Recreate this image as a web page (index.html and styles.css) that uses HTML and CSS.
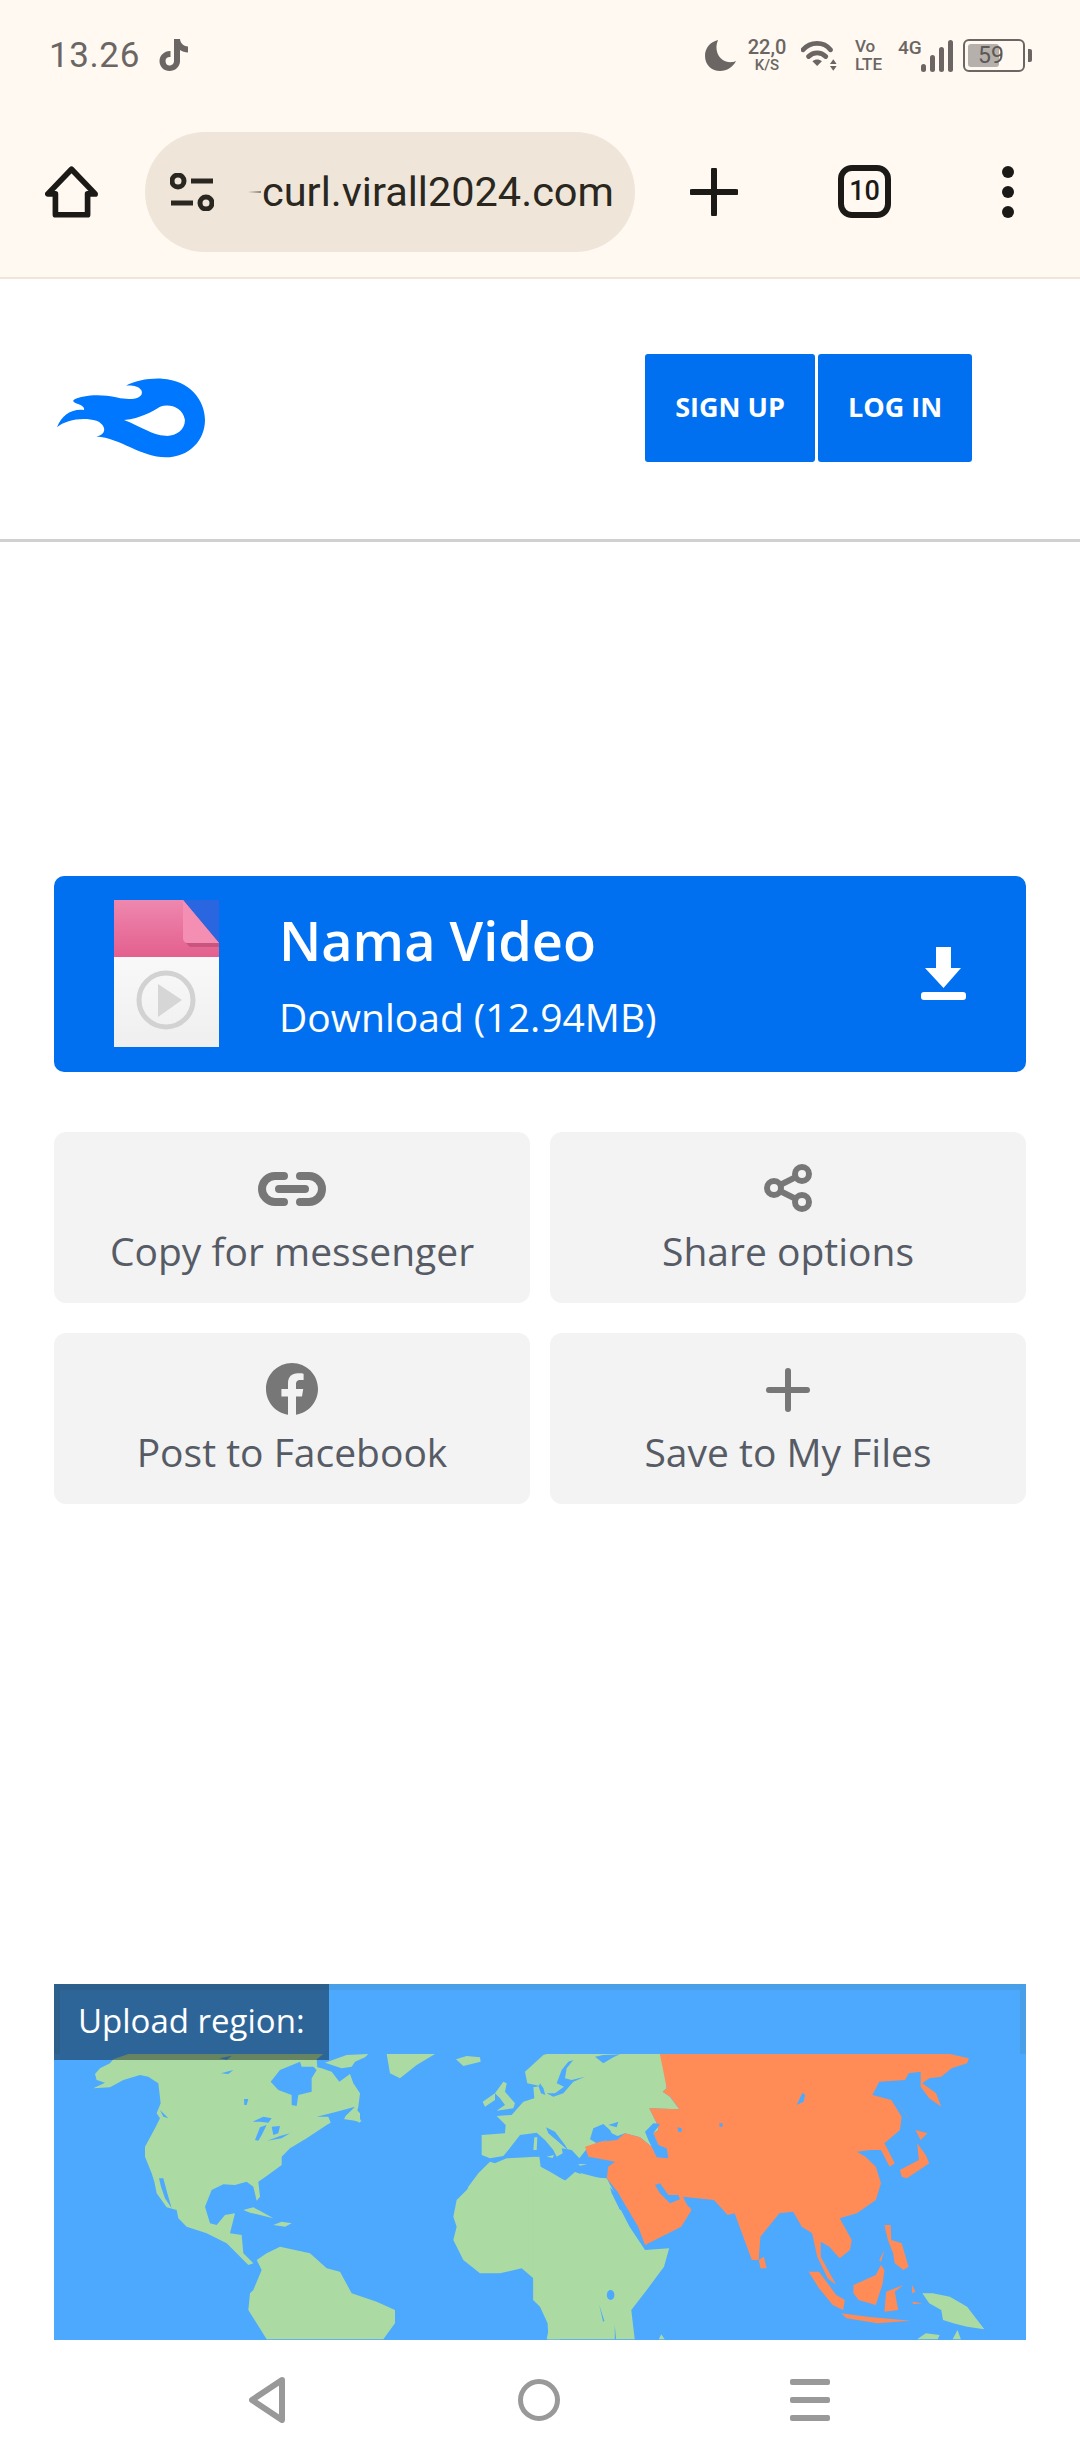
FILE: index.html
```html
<!DOCTYPE html>
<html lang="en">
<head>
<meta charset="utf-8">
<title>Nama Video</title>
<link rel="stylesheet" href="styles.css">
</head>
<body>
<div class="browser">
  <div class="status">
    <div class="status-left">
      <span class="clock">13.26</span>
      <svg class="tiktok" viewBox="0 0 32 34"><path d="M16 1h6c.4 4 3 7 8 7.500v6c-3 0-6-1-8-2.500v11c0 6-5 10-10.500 10S1.500 29 1.500 23 7 12.500 12.500 13v6c-2.500-.5-5 1-5 4s2 4.500 4 4.500 4.500-1.500 4.500-4.500z"/></svg>
    </div>
    <div class="status-right">
      <svg class="moon" viewBox="0 0 32 32"><path d="M13 1C5 3 0 9 0 17c0 9 7 15 15 15 7 0 13-4 16-10-3 1.500-7 1.500-10 .5C13 20 9 10 13 1z"/></svg>
      <div class="speed"><span class="speed-top">22,0</span><span class="speed-sub">K/S</span></div>
      <svg class="wifi" viewBox="0 0 40 32"><path class="wifi-arc" d="M2 10C10 1 24 1 31 10M8 17c5-5 13-5 18 0"/><path d="M12 22c3-2.500 7-2.500 10 0l-5 5zM34 20l3.500 5h-7zM34 32l-3.500-5h7z"/></svg>
      <div class="volte"><span>Vo</span><span>LTE</span></div>
      <span class="net">4G</span>
      <div class="bars"><i class="b1"></i><i class="b2"></i><i class="b3"></i><i class="b4"></i></div>
      <div class="battery"><div class="batt-body"><div class="batt-fill"></div><span class="batt-num">59</span></div><div class="batt-nub"></div></div>
    </div>
  </div>
  <div class="toolbar">
    <svg class="home" viewBox="0 0 56 54"><path d="M28 3 3 29h8v22h34V29h8z"/></svg>
    <div class="pill">
      <svg class="tune" viewBox="0 0 44 38"><circle cx="8" cy="8" r="6"/><path d="M21 8h22M1 30h22"/><circle cx="36" cy="30" r="6"/></svg>
      <span class="fade"></span>
      <span class="url">curl.virall2024.com</span>
    </div>
    <svg class="plus" viewBox="0 0 48 48"><path d="M24 2v44M2 24h44"/></svg>
    <div class="tabs">10</div>
    <div class="dots"><i></i><i></i><i></i></div>
  </div>
</div>

<header class="site-header">
  <svg class="logo" viewBox="83 113 214 242" preserveAspectRatio="none"><path fill-rule="evenodd" d="M83 262C90 225 105 205 122 210 125 190 100 190 108 178 120 165 145 160 170 172 190 182 210 175 205 150 200 135 190 135 183 136 195 122 215 113 235 115 275 120 297 180 297 240 297 300 275 353 240 353 205 353 175 295 140 290 155 285 155 255 140 242 120 230 95 240 83 262ZM180 240C205 235 220 215 232 200 245 190 265 200 268 240 268 270 255 290 240 288 220 285 205 260 180 240Z"/></svg>
  <nav class="auth">
    <a class="auth-btn signup">SIGN UP</a>
    <a class="auth-btn login">LOG IN</a>
  </nav>
</header>

<main class="content">
  <a class="hero">
    <svg class="thumb" viewBox="0 0 105 147">
      <defs>
        <linearGradient id="pink" x1="0" y1="0" x2="0" y2="1"><stop offset="0" stop-color="#ee88ae"/><stop offset="1" stop-color="#e35f8e"/></linearGradient>
        <linearGradient id="paper" x1="0" y1="0" x2="0" y2="1"><stop offset="0" stop-color="#ffffff"/><stop offset="1" stop-color="#efefef"/></linearGradient>
      </defs>
      <rect width="105" height="147" fill="url(#paper)"/>
      <rect width="105" height="57" fill="url(#pink)"/>
      <path d="M69 0h36v43z" fill="#2a66df"/>
      <path d="M69 0l36 43H74q-5 0-5-5z" fill="#f58eb3"/>
      <path d="M72 43h33v4H76z" fill="#c9557f"/>
      <circle cx="52" cy="100" r="27" fill="none" stroke="#d2d2d2" stroke-width="5"/>
      <path d="M44 84l24 16-24 17z" fill="#d6d6d6"/>
    </svg>
    <div class="hero-text">
      <div class="hero-title">Nama Video</div>
      <div class="hero-sub">Download (12.94MB)</div>
    </div>
    <svg class="dl" viewBox="0 0 45 53"><path d="M15 0h15v21h10L22.500 41 4 21h11z"/><rect y="45" width="45" height="8" rx="3"/></svg>
  </a>

  <section class="actions">
    <a class="action">
      <svg class="ico ico-link" viewBox="0 0 68 34"><path d="M26 4H17a13 13 0 0 0 0 26h9M42 4h9a13 13 0 0 1 0 26h-9"/><path d="M21 17h26"/></svg>
      <span class="action-label">Copy for messenger</span>
    </a>
    <a class="action">
      <svg class="ico ico-share" viewBox="0 0 48 48"><circle cx="10" cy="24" r="7"/><circle cx="38" cy="10" r="7"/><circle cx="38" cy="38" r="7"/><path d="M16 21l16-8M16 27l16 8"/></svg>
      <span class="action-label">Share options</span>
    </a>
    <a class="action">
      <svg class="ico ico-fb" viewBox="0 0 52 52"><path d="M52 26C52 11.600 40.400 0 26 0S0 11.600 0 26c0 13 9.500 23.800 22 25.700V33.500h-6.600V26H22v-5.700c0-6.500 3.900-10.100 9.800-10.100 2.800 0 5.800.5 5.800.5v6.400h-3.300c-3.200 0-4.300 2-4.300 4v4.900h7.200l-1.200 7.500h-6v18.200C42.500 49.800 52 39 52 26z"/></svg>
      <span class="action-label">Post to Facebook</span>
    </a>
    <a class="action">
      <svg class="ico ico-plus" viewBox="0 0 44 44"><path d="M22 3v38M3 22h38"/></svg>
      <span class="action-label">Save to My Files</span>
    </a>
  </section>

  <section class="map">
    <svg class="map-art" viewBox="54 1984 972 356">
      <rect class="sea" x="54" y="1984" width="972" height="356"/>
      <g transform="translate(40 1970) scale(.33333)">
        <g class="land">
          <path d="M165 312L180 295 210 280 220 268 265 252H850L830 268 832 292 845 295 875 305 898 335 930 312 940 340 960 370 955 410 950 430 965 455 930 450 895 445 860 465 800 505 750 535 725 560 725 585 680 618 655 635 660 680 650 692 640 650 620 635 585 645 550 643 515 660 495 710 510 760 530 765 555 735 585 730 570 790 605 795 610 850 640 880 625 885 590 850 560 820 500 790 440 770 415 745 410 720 380 712 350 670 343 635 335 610 315 560 315 530 345 475 360 445 350 430 362 400 355 340 325 320 300 315 250 330 210 352 160 355 100 378 160 355 195 338 170 330Z"/>
          <path d="M855 278L920 255 985 252 975 262 945 275 935 290 905 295Z"/>
          <path d="M1040 252H1185L1130 285 1080 325 1050 310Z"/>
          <path d="M610 720L640 712 665 725 700 745 660 735 630 728Z"/>
          <path d="M700 765L725 755 755 760 735 770Z"/>
          <path d="M640 960L665 900 650 870 680 850 720 830 810 850 860 895 900 905 935 970 1010 995 1065 1020 1065 1060 1030 1108H680L625 1020 630 970Z"/>
          <path d="M1240 740L1250 690 1290 650 1340 590 1400 565 1490 560 1500 590 1560 625V1108H1520L1530 1060 1490 970 1480 925 1445 895 1380 910 1320 910 1270 870 1240 810 1250 770Z"/>
        </g>
        <g class="water">
          <path d="M692 335L720 300 780 275 785 290 820 290 830 300 815 325 815 365 775 375 770 408 755 405 755 375 715 360Z"/>
          <path d="M830 440L890 425 945 410 920 435 900 465 875 465 865 440Z"/>
          <path d="M357 625L370 625 382 670 395 715 375 685 363 650Z"/>
          <path d="M638 455L670 440 695 445 685 458 660 455ZM645 510L660 472 680 465 665 495 655 512ZM695 470L720 468 715 490 700 495ZM682 512L720 498 750 490 725 505Z"/>
          <path d="M538 265L575 257 560 270ZM543 310L580 300 565 312ZM612 387h13l-5 18h-7ZM360 420L385 445 370 440Z"/>
        </g>
        <g class="land"><path d="M915 440L945 415 960 430 960 458 930 445Z"/></g>
      </g>
      <g transform="translate(440 2050) scale(.33333)">
        <g class="land">
          <path d="M125 255L195 250 197 225 170 198 215 195 250 155 283 145 280 112 300 108 262 100 255 65 310 15 320 12H670L680 115 668 125 690 140 718 178 628 175 648 215 655 240 640 250 655 285 632 288 600 262 555 250 445 290 418 325 395 300 365 295 368 310 350 320 340 300 315 270 290 248 240 255 205 300 190 318 150 325 125 315Z"/>
          <path d="M165 130L190 95 200 100 195 125 225 160 220 175 170 182 195 165 180 145Z"/>
          <path d="M128 155L165 130 165 150 135 170Z"/>
          <path d="M48 28L80 18 120 22 122 35 70 48Z"/>
          <path d="M283 262L292 262 290 300 280 300ZM320 320L342 315 338 324ZM415 342L442 343 420 347Z"/>
          <path d="M45 480L75 440 85 410 115 370 150 335 165 340 250 325 298 320 302 350 335 368 375 392 405 366 450 382 500 385 520 422 545 480Z"/>
        </g>
        <g class="water">
          <path d="M345 130L372 110 350 100 365 60 385 35 400 30 380 55 375 85 395 90 435 80 400 95 370 130 340 140 320 130Z"/>
          <path d="M465 20L490 15 540 13 520 22 490 40Z"/>
          <path d="M300 100L310 115 316 135 303 130 296 110Z"/>
          <path d="M318 232L345 245 375 285 385 302 355 275 325 250Z"/>
          <path d="M450 268L460 235 490 222 510 240 515 250 570 275 500 270 470 280Z"/>
          <path d="M505 225L535 215 530 232Z"/>
        </g>
      </g>
      <g transform="translate(540 1970) scale(.34444 .33333)">
        <g class="land">
          <path d="M-20 600L0 600 75 632 120 610 195 630 225 700 260 770 305 840 375 835 360 890 310 960 265 1020 275 1108H25L22 1060 0 1010-20 990Z"/>
          <path d="M345 1108L352 1093 362 1108Z"/>
          <path d="M1110 970L1140 970 1190 980 1240 1010 1290 1078 1240 1070 1200 1060 1170 1050 1165 1020 1130 1000Z"/>
          <path d="M1095 1108L1120 1090 1160 1095 1155 1108ZM1198 1108L1212 1080 1222 1108Z"/>
        </g>
        <g class="water">
          <ellipse cx="205" cy="975" rx="11" ry="15"/>
          <path d="M172 1005l15 48-4 2ZM217 1065l4 43h-4Z"/>
        </g>
        <g class="asia">
          <path d="M348 252H1190L1245 265 1240 280 1195 295 1165 320 1130 325 1110 340 1150 370 1165 410 1130 385 1105 350 1105 305 1070 310 1060 330 985 335 965 375 1020 390 1050 440 1045 480 1000 520 1020 560 1030 580 1015 590 990 540 960 540 920 545 945 560 975 590 990 640 975 690 920 730 870 745 905 810 900 840 870 865 840 830 815 815 815 860 860 945 835 925 805 860 790 790 760 770 735 725 695 730 640 800 635 870 615 870 565 730 545 735 505 690 415 680 440 720 410 770 305 825 285 770 256 720 225 665 194 625 198 590 218 575 165 565 140 560 131 530 174 515 223 510 247 490 290 502 321 528 344 525 329 490 344 480 337 455 317 415 405 418 378 380 356 365 368 355Z"/>
          <path d="M1045 600L1100 570 1095 520 1120 555 1130 580 1065 625 1050 620Z"/>
          <path d="M1090 480L1125 490 1105 510Z"/>
          <path d="M1030 385L1085 465 1060 430Z"/>
          <path d="M635 870L650 860 658 895 640 895Z"/>
          <path d="M780 905L810 905 860 975 885 990 880 1020 850 1005 810 955Z"/>
          <path d="M875 1030L950 1040 1075 1052 980 1060 890 1045Z"/>
          <path d="M910 945L975 915 990 885 1000 900 995 940 975 1005 925 990 910 970Z"/>
          <path d="M1005 965L1055 945 1030 965 1040 1020 1000 1025Z"/>
          <path d="M1000 765L1018 765 1020 810 1050 820 1070 890 1055 900 1030 880 1025 850 1010 810Z"/>
          <path d="M985 870L1000 840 990 875ZM1080 945L1090 965 1080 970ZM1080 995L1110 1000 1085 1003Z"/>
        </g>
        <g class="water">
          <path d="M745 405L762 368 770 375 765 395Z"/>
          <path d="M520 460h10v10h-8Z"/>
        </g>
      </g>
      <g transform="translate(440 2050) scale(.33333)">
        <g class="water">
          <path d="M615 245L640 220 660 222 640 250 655 285 680 295 685 325 650 322 635 290 625 270Z"/>
          <path d="M712 232L725 235 725 245 715 245Z"/>
          <path d="M645 405L660 400 685 435 715 435 720 448 690 460 660 430Z"/>
          <path d="M510 412L520 422 560 480 540 480 515 430Z"/>
          <path d="M730 445L760 470 815 450 840 480H780L745 470Z"/>
        </g>
      </g>
      <rect class="band" x="54" y="1984" width="972" height="70"/>
      <path class="band-edge" d="M54 1984h972v70h-6v-64H60v64h-6z"/>
    </svg>
    <div class="map-label">Upload region:</div>
  </section>
</main>

<footer class="navbar">
  <svg class="nav-back" viewBox="0 0 36 46"><path d="M33 3 3 23l30 20z"/></svg>
  <svg class="nav-home" viewBox="0 0 42 42"><circle cx="21" cy="21" r="18.500"/></svg>
  <div class="nav-menu"><i></i><i></i><i></i></div>
</footer>
</body>
</html>
```

FILE: styles.css
```css
* { box-sizing: border-box; }
html, body { margin: 0; padding: 0; }
body {
  width: 1080px;
  height: 2460px;
  overflow: hidden;
  background: #fff;
  font-family: "Open Sans", sans-serif;
}
a { display: flex; text-decoration: none; }

.browser {
  height: 279px;
  background: #fff9f2;
  border-bottom: 2px solid #efe6d8;
}
.status {
  height: 110px;
  padding: 0 48px 0 49px;
  display: flex;
  align-items: center;
  justify-content: space-between;
  color: #6b6663;
}
.status-left { display: flex; align-items: center; gap: 18px; }
.clock { font: 400 35px/1 Roboto, sans-serif; letter-spacing: .6px; }
.tiktok { width: 32px; height: 34px; fill: #6b6663; }
.status-right { display: flex; align-items: center; height: 40px; }
.moon { width: 32px; height: 32px; fill: #6b6663; margin-right: 10px; }
.speed { width: 40px; display: flex; flex-direction: column; align-items: center; font-family: Roboto, sans-serif; font-weight: 500; }
.speed-top { font-size: 20px; line-height: 20px; }
.speed-sub { font-size: 15px; line-height: 16px; }
.wifi { width: 38px; height: 31px; margin-left: 14px; fill: #6b6663; }
.wifi-arc { fill: none; stroke: #6b6663; stroke-width: 5; stroke-linecap: round; }
.volte { width: 30px; margin-left: 16px; display: flex; flex-direction: column; gap: 1px; font: 500 17px/17px Roboto, sans-serif; }
.net { font: 500 19px/1 Roboto, sans-serif; margin: -16px 0 0 13px; width: 23px; }
.bars { display: flex; align-items: flex-end; gap: 4px; height: 33px; margin: 0 10px 0 0; }
.bars i { display: block; width: 5px; background: #6b6663; border-radius: 3px; }
.b1 { height: 8px; } .b2 { height: 17px; } .b3 { height: 25px; } .b4 { height: 32px; }
.battery { display: flex; align-items: center; gap: 3px; }
.batt-body { position: relative; width: 62px; height: 33px; border: 2px solid #6b6663; border-radius: 6px; }
.batt-fill { position: absolute; left: 3px; top: 3px; bottom: 3px; width: 31px; background: #b5b0ab; border-radius: 3px; }
.batt-num { position: absolute; left: 13px; top: 3px; font: 400 23px/23px Roboto, sans-serif; color: #5d5855; }
.batt-nub { width: 4px; height: 13px; background: #6b6663; border-radius: 0 2px 2px 0; }

.toolbar {
  height: 167px;
  padding: 0 0 4px 45px;
  display: flex;
  align-items: center;
}
.home { width: 53px; height: 52px; fill: none; stroke: #1c1a17; stroke-width: 6; stroke-linejoin: round; }
.pill {
  width: 490px;
  height: 120px;
  margin-left: 47px;
  padding-left: 25px;
  background: #efe6d9;
  border-radius: 60px;
  display: flex;
  align-items: center;
}
.tune { width: 44px; height: 38px; fill: none; stroke: #2a2620; stroke-width: 5; stroke-linecap: butt; }
.fade { width: 13px; height: 2px; margin-left: 34px; background: linear-gradient(90deg, #efe6d9, #8a857d); }
.url { margin-left: 1px; font: 400 41.500px/1 Roboto, sans-serif; color: #2a2620; white-space: nowrap; }
.plus { width: 48px; height: 48px; margin-left: 55px; fill: none; stroke: #1c1a17; stroke-width: 6; stroke-linecap: round; }
.tabs {
  width: 53px; height: 53px; margin-left: 100px;
  border: 6px solid #1c1a17; border-radius: 14px;
  display: flex; align-items: center; justify-content: center;
  font: 500 27px/1 Roboto, sans-serif; color: #1c1a17;
}
.dots { margin-left: 111px; display: flex; flex-direction: column; gap: 8px; }
.dots i { display: block; width: 12px; height: 12px; border-radius: 50%; background: #1c1a17; }

.site-header {
  height: 263px;
  border-bottom: 3px solid #d0d0d0;
  display: flex;
  align-items: flex-start;
  padding: 75px 0 0 57px;
}
.logo { width: 148px; height: 80px; margin-top: 24px; fill: #0077ff; }
.auth { display: flex; gap: 3px; margin-left: 440px; }
.auth-btn {
  height: 108px;
  align-items: center;
  justify-content: center;
  background: #0070f0;
  color: #fff;
  font-weight: 700;
  font-size: 27px;
  border-radius: 3px;
  padding-bottom: 3px;
}
.signup { width: 170px; }
.login { width: 154px; }

.content { padding: 334px 54px 0; }
.hero {
  height: 196px;
  background: #0070f0;
  border-radius: 10px;
  align-items: flex-start;
  padding: 24px 60px 0 60px;
  color: #fff;
}
.thumb { width: 105px; height: 147px; flex: none; }
.hero-text { margin-left: 60px; margin-top: 5px; }
.hero-title { font-weight: 600; font-size: 54px; line-height: 70px; }
.hero-sub { font-size: 39px; line-height: 50px; margin-top: 17px; }
.dl { width: 45px; height: 53px; fill: #fff; margin: 47px 0 0 auto; }

.actions {
  margin-top: 60px;
  display: grid;
  grid-template-columns: 476px 476px;
  gap: 30px 20px;
}
.action {
  height: 171px;
  background: #f3f3f3;
  border-radius: 12px;
  flex-direction: column;
  align-items: center;
}
.ico { display: block; }
.ico-link { width: 68px; height: 34px; margin: 40px 0 20px; fill: none; stroke: #777; stroke-width: 8; stroke-linecap: round; }
.ico-share { width: 48px; height: 48px; margin: 32px 0 14px; fill: none; stroke: #777; stroke-width: 6; }
.ico-fb { width: 52px; height: 52px; margin: 30px 0 12px; fill: #777; }
.ico-plus { width: 44px; height: 44px; margin: 35px 0 15px; fill: none; stroke: #777; stroke-width: 6; stroke-linecap: round; }
.action-label { font-size: 39px; line-height: 50px; color: #565b65; white-space: nowrap; }

.map { position: relative; margin-top: 480px; height: 356px; overflow: hidden; }
.map-art { display: block; width: 972px; height: 356px; }
.sea, .band { fill: #4da9fd; }
.band-edge { fill: #4a9fe9; }
.land { fill: #abdba3; }
.asia { fill: #ff8c57; }
.water { fill: #4da9fd; }
.map-label {
  position: absolute;
  left: 0; top: 0;
  width: 275px;
  height: 76px;
  padding-left: 24px;
  background: rgba(0, 0, 0, .4);
  color: #fff;
  font-size: 33px;
  line-height: 74px;
}

.navbar {
  height: 120px;
  display: flex;
  align-items: center;
  justify-content: space-between;
  padding: 0 250px 0 249px;
}
.nav-back { width: 36px; height: 46px; fill: none; stroke: #999; stroke-width: 6; stroke-linejoin: round; }
.nav-home { width: 42px; height: 42px; margin-left: 3px; fill: none; stroke: #999; stroke-width: 5; }
.nav-menu { width: 40px; display: flex; flex-direction: column; gap: 12px; }
.nav-menu i { display: block; height: 6px; background: #999; border-radius: 2px; }
```
